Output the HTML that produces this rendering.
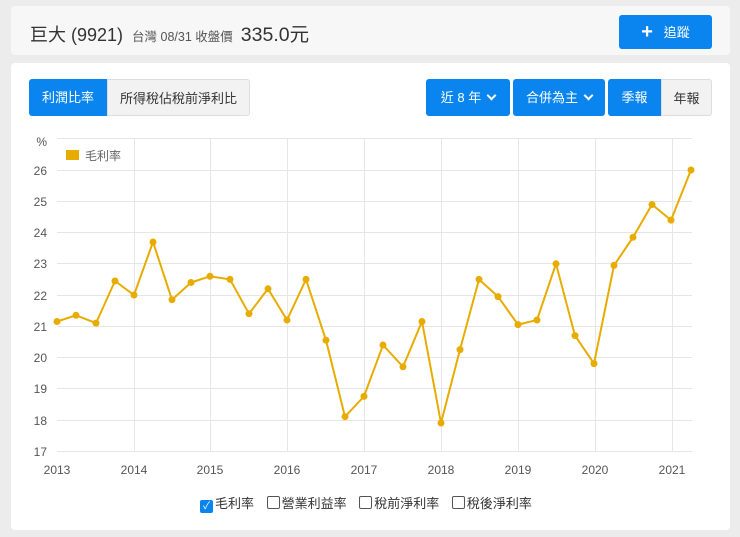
<!DOCTYPE html><html><head><meta charset="utf-8"><style>
body{margin:0;width:740px;height:537px;background:#ececec;font-family:"Liberation Sans","Noto Sans CJK TC",sans-serif;position:relative;overflow:hidden}
.card{position:absolute;left:11px;width:719px;border-radius:4px}
.btn{position:absolute;top:79px;height:37px;line-height:37px;font-size:13px;text-align:center;border-radius:3px;color:#fff;background:#0a85f0}
.g{background:#f2f2f2;color:#333;border:1px solid #ddd;box-sizing:border-box}
.chev{display:inline-block;width:5px;height:5px;border-right:2px solid #fff;border-bottom:2px solid #fff;transform:rotate(45deg);margin-left:7px;position:relative;top:-3px}
.cb{display:inline-block;width:11px;height:11px;border:1px solid #555;border-radius:2px;vertical-align:-1px;margin-right:2px}
</style></head><body>
<div class="card" style="top:6px;height:49px;background:#f7f7f7"></div>
<div style="position:absolute;left:30px;top:18px;font-size:18px;color:#333;white-space:nowrap">巨大 (9921)<span style="font-size:12.5px;color:#555;margin-left:9px">台灣 08/31 收盤價</span><span style="font-size:19.5px;margin-left:8px">335.0元</span></div>
<div class="btn" style="left:619px;top:15px;width:93px;height:34px;line-height:34px"><b style="font-size:20px;vertical-align:-1px">+</b>&nbsp;&nbsp; 追蹤</div>
<div class="card" style="top:63px;height:467px;background:#fff"></div>
<div class="btn" style="left:29px;width:78px;border-radius:3px 0 0 3px">利潤比率</div>
<div class="btn g" style="left:107px;width:143px;border-radius:0 3px 3px 0">所得稅佔稅前淨利比</div>
<div class="btn" style="left:426px;width:84px">近 8 年<span class="chev"></span></div>
<div class="btn" style="left:513px;width:92px">合併為主<span class="chev"></span></div>
<div class="btn" style="left:608px;width:53px;border-radius:3px 0 0 3px">季報</div>
<div class="btn g" style="left:661px;width:51px;border-radius:0 3px 3px 0">年報</div>
<svg style="position:absolute;left:0;top:0" width="740" height="537" font-family="Liberation Sans" font-size="12" fill="#555">
<g stroke="#e6e6e6" stroke-width="1">
<line x1="57" y1="138.5" x2="692" y2="138.5"/>
<line x1="57" y1="170.5" x2="692" y2="170.5"/><line x1="57" y1="201.5" x2="692" y2="201.5"/><line x1="57" y1="232.5" x2="692" y2="232.5"/><line x1="57" y1="263.5" x2="692" y2="263.5"/><line x1="57" y1="295.5" x2="692" y2="295.5"/><line x1="57" y1="326.5" x2="692" y2="326.5"/><line x1="57" y1="357.5" x2="692" y2="357.5"/><line x1="57" y1="388.5" x2="692" y2="388.5"/><line x1="57" y1="420.5" x2="692" y2="420.5"/><line x1="57" y1="451.5" x2="692" y2="451.5"/>
<line x1="134.5" y1="138" x2="134.5" y2="451"/><line x1="210.5" y1="138" x2="210.5" y2="451"/><line x1="287.5" y1="138" x2="287.5" y2="451"/><line x1="364.5" y1="138" x2="364.5" y2="451"/><line x1="441.5" y1="138" x2="441.5" y2="451"/><line x1="518.5" y1="138" x2="518.5" y2="451"/><line x1="595.5" y1="138" x2="595.5" y2="451"/><line x1="672.5" y1="138" x2="672.5" y2="451"/>
</g>
<g text-anchor="end"><text x="47" y="146">%</text><text x="47" y="175">26</text><text x="47" y="206">25</text><text x="47" y="237">24</text><text x="47" y="268">23</text><text x="47" y="300">22</text><text x="47" y="331">21</text><text x="47" y="362">20</text><text x="47" y="393">19</text><text x="47" y="425">18</text><text x="47" y="456">17</text></g>
<g text-anchor="middle"><text x="57" y="474">2013</text><text x="134" y="474">2014</text><text x="210" y="474">2015</text><text x="287" y="474">2016</text><text x="364" y="474">2017</text><text x="441" y="474">2018</text><text x="518" y="474">2019</text><text x="595" y="474">2020</text><text x="672" y="474">2021</text></g>
<rect x="66" y="150" width="13" height="10" fill="#e8ac00"/><text x="85" y="160" font-family="Liberation Sans,Noto Sans CJK TC" fill="#666">毛利率</text>
<polyline fill="none" stroke="#e8ac00" stroke-width="2" points="57,321.5 76,315.3 96,323.1 115,281 134,295 153,242 172,299.7 191,282.5 210,276.3 230,279.4 249,313.7 268,288.8 287,320 306,279.4 326,340.2 345,416.7 364,396.4 383,345 403,366.8 422,321.5 441,423 460,349.6 479,279.4 498,296.6 518,324.6 537,320 556,263.8 575,335.6 594,363.6 614,265.4 633,237.3 652,204.5 671,220.1 691,170"/>
<g fill="#e8ac00"><circle cx="57" cy="321.5" r="3.5"/><circle cx="76" cy="315.3" r="3.5"/><circle cx="96" cy="323.1" r="3.5"/><circle cx="115" cy="281" r="3.5"/><circle cx="134" cy="295" r="3.5"/><circle cx="153" cy="242" r="3.5"/><circle cx="172" cy="299.7" r="3.5"/><circle cx="191" cy="282.5" r="3.5"/><circle cx="210" cy="276.3" r="3.5"/><circle cx="230" cy="279.4" r="3.5"/><circle cx="249" cy="313.7" r="3.5"/><circle cx="268" cy="288.8" r="3.5"/><circle cx="287" cy="320" r="3.5"/><circle cx="306" cy="279.4" r="3.5"/><circle cx="326" cy="340.2" r="3.5"/><circle cx="345" cy="416.7" r="3.5"/><circle cx="364" cy="396.4" r="3.5"/><circle cx="383" cy="345" r="3.5"/><circle cx="403" cy="366.8" r="3.5"/><circle cx="422" cy="321.5" r="3.5"/><circle cx="441" cy="423" r="3.5"/><circle cx="460" cy="349.6" r="3.5"/><circle cx="479" cy="279.4" r="3.5"/><circle cx="498" cy="296.6" r="3.5"/><circle cx="518" cy="324.6" r="3.5"/><circle cx="537" cy="320" r="3.5"/><circle cx="556" cy="263.8" r="3.5"/><circle cx="575" cy="335.6" r="3.5"/><circle cx="594" cy="363.6" r="3.5"/><circle cx="614" cy="265.4" r="3.5"/><circle cx="633" cy="237.3" r="3.5"/><circle cx="652" cy="204.5" r="3.5"/><circle cx="671" cy="220.1" r="3.5"/><circle cx="691" cy="170" r="3.5"/></g>
</svg>
<div style="position:absolute;left:200px;top:493px;font-size:13px;color:#333;white-space:nowrap">
<span class="cb" style="background:#0a85f0;border-color:#0a85f0;color:#fff;font-size:10px;line-height:11px;text-align:center">✓</span>毛利率<span style="margin-left:9px"></span>
<span class="cb"></span>營業利益率<span style="margin-left:9px"></span>
<span class="cb"></span>稅前淨利率<span style="margin-left:9px"></span>
<span class="cb"></span>稅後淨利率</div>
</body></html>
